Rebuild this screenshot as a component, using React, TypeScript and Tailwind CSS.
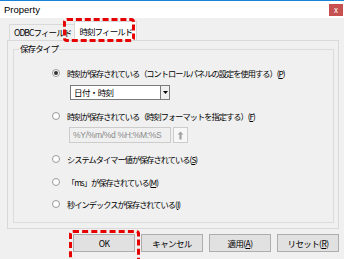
import React from 'react';

const font = { fontFamily: '"Noto Sans CJK JP", "Liberation Sans", sans-serif' };

const Radio: React.FC<{ checked?: boolean; label: string; mnemonic: string }> = ({ checked, label, mnemonic }) => (
  <div className="flex items-center h-[10px] gap-[7px]">
    <div className="w-[8px] h-[8px] rounded-full border border-[#9a9a9a] bg-white flex items-center justify-center shrink-0">
      {checked && <div className="w-[4px] h-[4px] rounded-full bg-[#333]"></div>}
    </div>
    <span className="text-[8.2px] leading-none tracking-[-0.95px] text-black whitespace-nowrap">
      {label}(<span className="underline">{mnemonic}</span>)
    </span>
  </div>
);

const Button: React.FC<{ label: React.ReactNode }> = ({ label }) => (
  <button className="w-[62px] h-[18px] bg-[#e1e1e1] border border-[#adadad] text-[8.5px] tracking-[-0.6px] leading-none text-black flex items-center justify-center">
    {label}
  </button>
);

const App: React.FC = () => {
  return (
    <div className="relative w-[344px] h-[259px] bg-[#f0f0f0] overflow-hidden" style={font}>
      {/* Title bar */}
      <div className="h-[18px] bg-white border-t border-[#1883d7] flex items-center justify-between pl-[4px] pr-[1px]">
        <span className="text-[9.5px] leading-none text-black" style={{ fontFamily: '"Liberation Sans", sans-serif' }}>Property</span>
        <div className="w-[14px] h-[12px] bg-[#c75050] flex items-center justify-center text-white text-[8px] leading-none">x</div>
      </div>

      <div className="pl-[7px] pr-[5px] pt-[3px]">
        {/* Tabs */}
        <div className="flex items-end h-[19px] pl-[2px]">
          <div className="h-[16px] px-[4px] border border-b-0 border-[#d9d9d9] flex items-center text-[8.5px] tracking-[-0.9px] leading-none text-black">
            ODBCフィールド
          </div>
          <div className="h-[19px] px-[4px] -ml-[2px] bg-white border border-b-0 border-[#d9d9d9] flex items-center text-[8.5px] tracking-[-0.9px] leading-none text-black">
            時刻フィールド
          </div>
        </div>

        {/* Tab panel */}
        <div className="h-[189px] border border-[#d9d9d9] pl-[5px] pr-[4px] pt-[8px]">
          <div className="relative h-[174px] border border-[#dcdcdc]">
            <span className="absolute -top-[6px] left-[5px] px-[1px] bg-[#f0f0f0] text-[8.5px] tracking-[-0.9px] leading-none text-black">保存タイプ</span>

            <div className="flex flex-col pl-[38px] pt-[18px]">
              <Radio checked label="時刻が保存されている（コントロールパネルの設定を使用する）" mnemonic="P" />

              <div className="mt-[7px] ml-[18px] w-[100px] h-[15px] bg-white border border-[#7a7a7a] flex items-center justify-between">
                <span className="pl-[3px] text-[8.5px] tracking-[-0.6px] leading-none text-black">日付・時刻</span>
                <div className="w-[9px] h-[13px] border-l border-[#7a7a7a] bg-[#f0f0f0] flex items-center justify-center">
                  <svg width="5" height="3" viewBox="0 0 5 3"><path d="M0 0h5L2.5 3z" fill="#000" /></svg>
                </div>
              </div>

              <div className="mt-[11px]">
                <Radio label="時刻が保存されている（時刻フォーマットを指定する）" mnemonic="F" />
              </div>

              <div className="mt-[6px] ml-[17px] flex items-center gap-[2px]">
                <div className="w-[102px] h-[16px] bg-[#f0f0f0] border border-[#cccccc] flex items-center">
                  <span className="pl-[3px] text-[8.5px] leading-none text-[#8a8a8a] tracking-[-0.3px]" style={{ fontFamily: '"Liberation Sans", sans-serif' }}>%Y/%m/%d %H:%M:%S</span>
                </div>
                <div className="w-[15px] h-[16px] bg-[#f7f7f7] border border-[#cccccc] flex items-center justify-center">
                  <svg width="7" height="9" viewBox="0 0 7 9">
                    <path d="M3.5 0.5L6.5 3.5H4.6V8.5H2.4V3.5H0.5Z" fill="#a0a0a0" />
                  </svg>
                </div>
              </div>

              <div className="mt-[11px]">
                <Radio label="システムタイマー値が保存されている" mnemonic="S" />
              </div>
              <div className="mt-[13px]">
                <Radio label="「ms」が保存されている" mnemonic="M" />
              </div>
              <div className="mt-[12px]">
                <Radio label="秒インデックスが保存されている" mnemonic="I" />
              </div>
            </div>
          </div>
        </div>
      </div>

      {/* Buttons */}
      <div className="flex gap-[6px] pl-[73px] mt-[5px]">
        <Button label="OK" />
        <Button label="キャンセル" />
        <Button label={<>適用(<span className="underline">A</span>)</>} />
        <Button label={<>リセット(<span className="underline">R</span>)</>} />
      </div>

      {/* Highlight marks */}
      <div className="absolute left-[63px] top-[18px] w-[72px] h-[24px] border-[3px] border-dashed border-[#e60000] rounded-[4px]"></div>
      <div className="absolute left-[69px] top-[230px] w-[71px] h-[32px] border-[3px] border-dashed border-[#e60000] rounded-[4px]"></div>
    </div>
  );
};

export default App;
